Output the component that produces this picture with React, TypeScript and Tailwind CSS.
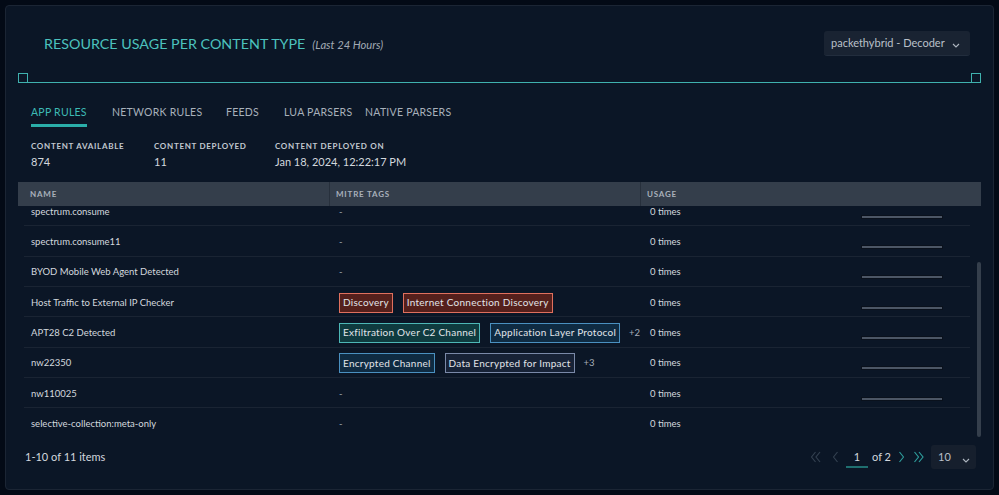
import React from "react";

type Tag = { label: string; tone: "red" | "teal" | "blue" | "slate" };
interface Row {
  name: string;
  tags: Tag[];
  more?: number;
  bar: boolean;
}

const rows: Row[] = [
  { name: "spectrum.consume", tags: [], bar: true },
  { name: "spectrum.consume11", tags: [], bar: true },
  { name: "BYOD Mobile Web Agent Detected", tags: [], bar: true },
  {
    name: "Host Traffic to External IP Checker",
    tags: [
      { label: "Discovery", tone: "red" },
      { label: "Internet Connection Discovery", tone: "red" },
    ],
    bar: true,
  },
  {
    name: "APT28 C2 Detected",
    tags: [
      { label: "Exfiltration Over C2 Channel", tone: "teal" },
      { label: "Application Layer Protocol", tone: "blue" },
    ],
    more: 2,
    bar: true,
  },
  {
    name: "nw22350",
    tags: [
      { label: "Encrypted Channel", tone: "blue" },
      { label: "Data Encrypted for Impact", tone: "slate" },
    ],
    more: 3,
    bar: true,
  },
  { name: "nw110025", tags: [], bar: true },
  { name: "selective-collection:meta-only", tags: [], bar: false },
];

const toneClass = {
  red: "bg-[#55201c] border-[#e0705e]",
  teal: "bg-[#0f3b3f] border-[#4db7b6]",
  blue: "bg-[#0f2b42] border-[#4a90c0]",
  slate: "bg-[#172236] border-[#7a89a8]",
};

// tab label + width of the slot it sits in
const tabs: [string, string][] = [
  ["APP RULES", "w-[81px]"],
  ["NETWORK RULES", "w-[114px]"],
  ["FEEDS", "w-[58px]"],
  ["LUA PARSERS", "w-[81px]"],
  ["NATIVE PARSERS", "w-auto"],
];

const Chevron = ({ className = "" }: { className?: string }) => (
  <svg width="8" height="5" viewBox="0 0 8 5" className={className}>
    <polyline points="1,1 4,4 7,1" fill="none" stroke="#aeb6c0" strokeWidth="1.1" />
  </svg>
);

const PageArrow = ({ dir, double, color }: { dir: "l" | "r"; double?: boolean; color: string }) => {
  const w = double ? 10 : 5;
  const pts = (x: number) =>
    dir === "l" ? `${x + 4},1 ${x},6 ${x + 4},11` : `${x},1 ${x + 4},6 ${x},11`;
  return (
    <svg width={w} height="12" viewBox={`0 0 ${w} 12`}>
      <polyline points={pts(0.5)} fill="none" stroke={color} strokeWidth="1.2" />
      {double && <polyline points={pts(5)} fill="none" stroke={color} strokeWidth="1.2" />}
    </svg>
  );
};

const App = () => {
  return (
    <div
      className="w-[999px] h-[495px] bg-[#030a16] p-[5px] text-[#d3d8de]"
      style={{ fontFamily: "Lato, 'Noto Sans', sans-serif" }}
    >
      <div className="h-full border border-[#1b2534] rounded-[4px] bg-[#0b1626] flex flex-col">
        {/* Header */}
        <div className="flex items-start justify-between pt-[25px] pl-[38px] pr-[23px]">
          <div className="flex items-baseline mt-[2px]">
            <h1 className="text-[14.3px] text-[#4cc2be] whitespace-nowrap">
              RESOURCE USAGE PER CONTENT TYPE
            </h1>
            <span className="ml-[7px] text-[11.2px] italic text-[#a2aab4] whitespace-nowrap">(Last 24 Hours)</span>
          </div>
          <div className="w-[146px] h-[25px] rounded-[3px] bg-[#192332] border-b border-[#222d3d] flex items-center pl-[7px] pr-[10px] justify-between">
            <span className="text-[11px] text-[#b9c0c9] whitespace-nowrap">packethybrid - Decoder</span>
            <Chevron className="mt-[5px]" />
          </div>
        </div>

        {/* Divider with squares */}
        <div className="flex items-end mx-[12px] mt-[17px]">
          <div className="w-[10px] h-[10px] border border-[#3fb1ae]" />
          <div className="flex-1 h-[1.5px] bg-[#3fb1ae]" />
          <div className="w-[10px] h-[10px] border border-[#3fb1ae]" />
        </div>

        {/* Tabs */}
        <div className="flex pl-[25px] mt-[15px]">
          {tabs.map(([t, w], i) => (
            <div key={t} className={w}>
              <div className="inline-flex flex-col">
                <span
                  className={`text-[10.5px] tracking-[0.25px] leading-[14px] whitespace-nowrap ${
                    i === 0 ? "text-[#3dbab5]" : "text-[#a8b1bb]"
                  }`}
                >
                  {t}
                </span>
                <div className={`mt-[5px] h-[3px] ${i === 0 ? "bg-[#2aaea9]" : "bg-transparent"}`} />
              </div>
            </div>
          ))}
        </div>

        {/* Stats */}
        <div className="flex pl-[25px] mt-[13px]">
          {[
            ["CONTENT AVAILABLE", "874", "w-[123px]"],
            ["CONTENT DEPLOYED", "11", "w-[121px]"],
            ["CONTENT DEPLOYED ON", "Jan 18, 2024, 12:22:17 PM", ""],
          ].map(([label, value, w]) => (
            <div key={label} className={w}>
              <div className="text-[8px] leading-[12px] font-bold tracking-[0.7px] text-[#c2c8d0]">{label}</div>
              <div className="text-[11px] leading-[16px] mt-[2px]">{value}</div>
            </div>
          ))}
        </div>

        {/* Table */}
        <div className="mx-[12px] mt-[12px]">
          <div className="grid grid-cols-[311px_311px_1fr] h-[24px] bg-[#343e4b] text-[8px] font-bold tracking-[0.8px] text-[#a9b1bb]">
            <div className="flex items-center pl-[12px]">NAME</div>
            <div className="flex items-center pl-[6px] border-l border-[#27303c]">MITRE TAGS</div>
            <div className="flex items-center pl-[6px] border-l border-[#27303c]">USAGE</div>
          </div>
          <div className="flex h-[232px] overflow-hidden pl-[6px]">
            <div className="w-[946px] -mt-[10px]">
              {rows.map((r) => (
                <div
                  key={r.name}
                  className="grid grid-cols-[309px_311px_1fr] h-[30.33px] pt-[2px] border-b border-[#1a2433] items-center text-[9.5px]"
                >
                  <div className="pl-[7px] whitespace-nowrap">{r.name}</div>
                  <div className="pl-[6px] flex items-center">
                    {r.tags.length === 0 ? (
                      <span className="text-[#a0a8b2]">-</span>
                    ) : (
                      <>
                        {r.tags.map((t, i) => (
                          <span
                            key={t.label}
                            className={`${i > 0 ? "ml-[10px]" : ""} h-[20px] px-[3px] flex items-center border whitespace-nowrap text-[10px] tracking-[0.25px] text-[#e1e5ea] ${toneClass[t.tone]}`}
                          >
                            {t.label}
                          </span>
                        ))}
                        {r.more && <span className="ml-[9px] text-[#a5adb7]">+{r.more}</span>}
                      </>
                    )}
                  </div>
                  <div className="pl-[6px] flex items-center">
                    <span>0 times</span>
                    {r.bar && (
                      <div className="ml-auto mr-[28px] mt-[10px] w-[80px] h-[2px] bg-[#4c5665] shadow-[0_0_0_1px_#0a111c]" />
                    )}
                  </div>
                </div>
              ))}
            </div>
            <div className="ml-[7px] w-[4px]">
              <div className="mt-[56px] h-[175px] w-[4px] rounded-full bg-[#353f4c]" />
            </div>
          </div>
        </div>

        {/* Footer */}
        <div className="flex items-center justify-between pl-[19px] pr-[17px] mt-[7px]">
          <span className="text-[11px] text-[#d3d8de]">1-10 of 11 items</span>
          <div className="flex items-center h-[24px]">
            <PageArrow dir="l" double color="#334050" />
            <span className="ml-[12px]">
              <PageArrow dir="l" color="#334050" />
            </span>
            <div className="ml-[8px] w-[22px] flex flex-col items-center mt-[3px]">
              <span className="text-[11px] leading-[14px]">1</span>
              <div className="mt-[2px] h-[2px] w-[22px] bg-[#1f6f70]" />
            </div>
            <span className="ml-[4px] text-[11px]">of 2</span>
            <span className="ml-[8px]">
              <PageArrow dir="r" color="#2e9c9b" />
            </span>
            <span className="ml-[10px]">
              <PageArrow dir="r" double color="#2e9c9b" />
            </span>
            <div className="ml-[7px] w-[45px] h-[24px] rounded-[3px] bg-[#161f2d] flex items-center justify-between pl-[7px] pr-[6px]">
              <span className="text-[11px] text-[#b9c0c9]">10</span>
              <Chevron className="mt-[6px]" />
            </div>
          </div>
        </div>
      </div>
    </div>
  );
};

export default App;
